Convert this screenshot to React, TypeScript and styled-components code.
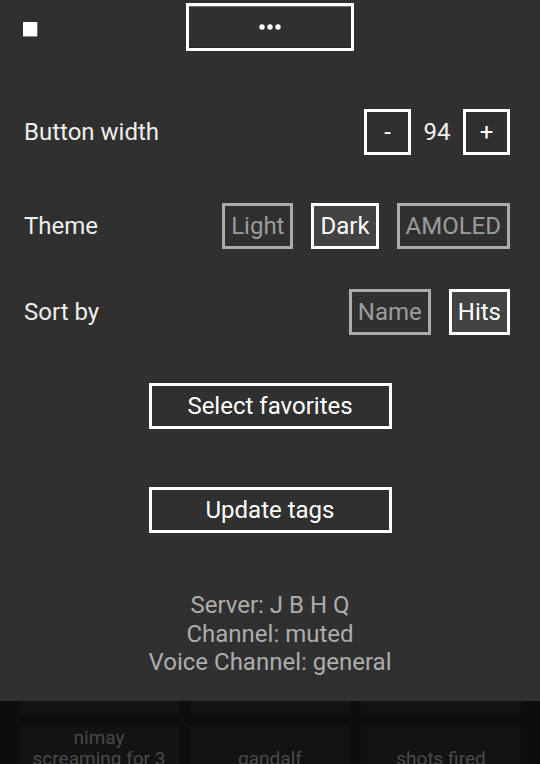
import React from "react";
import styled, { createGlobalStyle } from "styled-components";

const GlobalStyle = createGlobalStyle`
  html, body {
    margin: 0;
    padding: 0;
    overflow: hidden;
    background: #0d0d0d;
  }
  body {
    font-family: Roboto, "Noto Sans", "Liberation Sans", sans-serif;
  }
  * { box-sizing: border-box; }
`;

const Page = styled.div`
  position: relative;
  width: 540px;
  height: 764px;
  overflow: hidden;
  background: #0d0d0d;
`;

const TileGrid = styled.div`
  display: grid;
  grid-template-columns: repeat(3, 160px);
  grid-auto-rows: 68px;
  gap: 13px 11px;
  padding: 78px 19px 0 19px;
`;

const Tile = styled.div`
  background: #131313;
  color: #4a4a4a;
  font-size: 19px;
  line-height: 21px;
  padding: 0 12px 4px 12px;
  display: flex;
  align-items: center;
  justify-content: center;
  text-align: center;
`;

const Panel = styled.div`
  position: absolute;
  top: 0;
  left: 0;
  right: 0;
  height: 701px;
  background: #303030;
  display: flex;
  flex-direction: column;
  padding-top: 3px;
`;

const Header = styled.div`
  display: grid;
  grid-template-columns: 1fr 168px 1fr;
  height: 48px;
`;

const StopSquare = styled.div`
  width: 14px;
  height: 14px;
  background: #ffffff;
  margin: 19px 0 0 23px;
  box-shadow: 0 1px 0 #8c8c8c, 1px 0 0 #6a6a6a;
`;

const MenuButton = styled.button`
  width: 168px;
  height: 48px;
  border: 3px solid #ffffff;
  background: transparent;
  box-shadow: inset 0 1px 0 #6e6e6e, inset 0 -1px 0 #242424;
  display: flex;
  align-items: center;
  justify-content: center;
  padding: 0;
  margin: 0;
`;

const SettingRow = styled.div<{ $mt: number }>`
  display: flex;
  align-items: center;
  justify-content: space-between;
  height: 46px;
  padding: 0 30px 0 24px;
  margin-top: ${(p) => p.$mt}px;
`;

const Label = styled.span`
  font-size: 24px;
  color: #eeeeee;
`;

const Stepper = styled.div`
  display: flex;
  align-items: center;
`;

const StepButton = styled.button`
  width: 47px;
  height: 46px;
  border: 3px solid #ffffff;
  background: transparent;
  color: #ffffff;
  font-family: inherit;
  font-size: 24px;
  padding: 0;
  margin: 0;
`;

const StepValue = styled.span`
  width: 52px;
  text-align: center;
  font-size: 24px;
  color: #f2f2f2;
`;

const Options = styled.div`
  display: flex;
  align-items: center;
  gap: 18px;
`;

const OptionButton = styled.button<{ $active?: boolean }>`
  height: 46px;
  padding: 0 6px;
  margin: 0;
  border: 3px solid ${(p) => (p.$active ? "#ffffff" : "#ababab")};
  background: ${(p) => (p.$active ? "#434343" : "transparent")};
  color: ${(p) => (p.$active ? "#ffffff" : "#9c9c9c")};
  font-family: inherit;
  font-size: 24px;
`;

const ActionButton = styled.button<{ $mt: number }>`
  align-self: center;
  width: 243px;
  height: 46px;
  margin: ${(p) => p.$mt}px 0 0 0;
  padding: 0;
  border: 3px solid #ffffff;
  background: transparent;
  color: #ffffff;
  font-family: inherit;
  font-size: 24px;
`;

const Footer = styled.div`
  margin-top: 58px;
  text-align: center;
  color: #adadad;
  font-size: 24px;
  line-height: 28.5px;
`;

const tiles: string[] = [
  "airhorn", "bruh", "oof",
  "wow", "nope", "yeet",
  "sad trombone", "drum roll", "applause",
  "windows error", "vine boom", "laugh track",
  "cricket", "ding", "fail",
  "hello there", "john cena", "coffin dance",
  "mlg", "bonk", "sus",
  "my favorite song", "bye", "wasted",
  "nimay screaming for 3 hours", "gandalf", "shots fired",
];

export default function App() {
  return (
    <Page>
      <GlobalStyle />
      <TileGrid>
        {tiles.map((t, i) => (
          <Tile key={i}>{t}</Tile>
        ))}
      </TileGrid>
      <Panel>
        <Header>
          <StopSquare />
          <MenuButton aria-label="more">
            <svg width="22" height="6" viewBox="0 0 22 6">
              <circle cx="3" cy="3" r="2.7" fill="#fff" />
              <circle cx="11" cy="3" r="2.7" fill="#fff" />
              <circle cx="19" cy="3" r="2.7" fill="#fff" />
            </svg>
          </MenuButton>
          <div />
        </Header>

        <SettingRow $mt={58}>
          <Label>Button width</Label>
          <Stepper>
            <StepButton>-</StepButton>
            <StepValue>94</StepValue>
            <StepButton>+</StepButton>
          </Stepper>
        </SettingRow>

        <SettingRow $mt={48}>
          <Label>Theme</Label>
          <Options>
            <OptionButton>Light</OptionButton>
            <OptionButton $active>Dark</OptionButton>
            <OptionButton>AMOLED</OptionButton>
          </Options>
        </SettingRow>

        <SettingRow $mt={40}>
          <Label>Sort by</Label>
          <Options>
            <OptionButton>Name</OptionButton>
            <OptionButton $active>Hits</OptionButton>
          </Options>
        </SettingRow>

        <ActionButton $mt={48}>Select favorites</ActionButton>
        <ActionButton $mt={58}>Update tags</ActionButton>

        <Footer>
          <div>Server: J B H Q</div>
          <div>Channel: muted</div>
          <div>Voice Channel: general</div>
        </Footer>
      </Panel>
    </Page>
  );
}
